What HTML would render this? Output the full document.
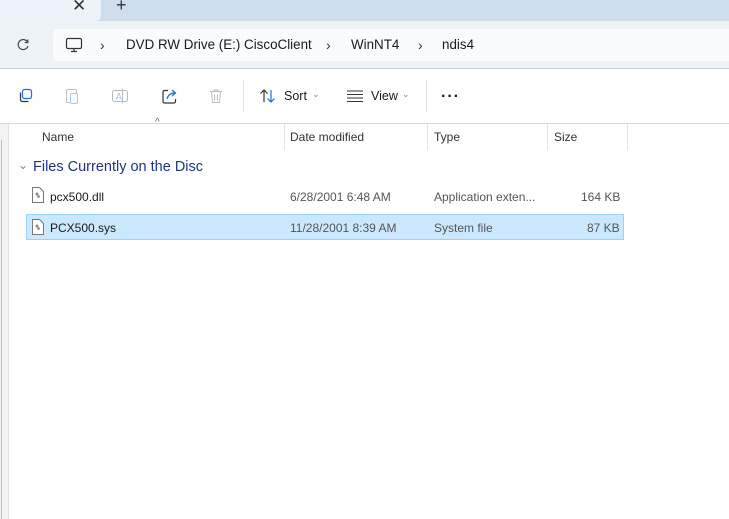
<!DOCTYPE html>
<html><head><meta charset="utf-8"><style>
body{margin:0;width:729px;height:519px;overflow:hidden;background:#fff;font-family:"Liberation Sans",sans-serif;position:relative;font-size:12px;color:#1a1a1a}
div{position:absolute;box-sizing:border-box}
.t{white-space:nowrap}
</style></head><body>
<div style="left:0;top:0;width:729px;height:21px;background:#cfdeec"></div>
<div style="left:0;top:0;width:101px;height:21px;background:#eef3f9;border-bottom-right-radius:6px"></div>
<div class="t" style="left:72px;top:-4px;font-size:17px;color:#333">✕</div>
<div class="t" style="left:116px;top:-5px;font-size:18px;color:#333">+</div>
<div style="left:0;top:21px;width:729px;height:48px;background:#eef3f8;border-bottom:1px solid #c8d2dc"></div>
<div style="left:53px;top:29px;width:676px;height:32px;background:#f9fbfd;border-radius:5px 0 0 5px"></div>
<svg style="position:absolute;left:15px;top:37px" width="16" height="16" viewBox="0 0 16 16"><path d="M12.5 5A5 5 0 1 0 13 9" fill="none" stroke="#444" stroke-width="1.2"/><path d="M12.8 2.5v3h-3" fill="none" stroke="#444" stroke-width="1.2"/></svg>
<svg style="position:absolute;left:65px;top:37px" width="18" height="16" viewBox="0 0 18 16"><rect x="1.5" y="1.5" width="15" height="10" rx="1.5" fill="none" stroke="#333" stroke-width="1.2"/><path d="M6 14.5h6M9 11.5v3" stroke="#333" stroke-width="1.2"/></svg>
<div class="t" style="left:100px;top:37px;font-size:14px;color:#333">›</div>
<div class="t" style="left:126px;top:37px;font-size:13.4px;color:#1a1a1a">DVD RW Drive (E:) CiscoClient</div>
<div class="t" style="left:326px;top:37px;font-size:14px;color:#333">›</div>
<div class="t" style="left:351px;top:37px;font-size:13.4px">WinNT4</div>
<div class="t" style="left:418px;top:37px;font-size:14px;color:#333">›</div>
<div class="t" style="left:442px;top:37px;font-size:13.4px">ndis4</div>
<svg style="position:absolute;left:17px;top:88px" width="16" height="16" viewBox="0 0 16 16"><rect x="5.5" y="1.5" width="9" height="9" rx="2" fill="none" stroke="#1a6ed8" stroke-width="1.2"/><path d="M3.5 4.5v7a2 2 0 0 0 2 2h6" fill="none" stroke="#333" stroke-width="1.2"/></svg>
<svg style="position:absolute;left:64px;top:87px" width="16" height="18" viewBox="0 0 16 18"><rect x="2.5" y="2.5" width="10" height="13" rx="1.5" fill="none" stroke="#bbb"/><rect x="6.5" y="6.5" width="7" height="10" rx="1.5" fill="#fff" stroke="#a8c8f0"/></svg>
<svg style="position:absolute;left:111px;top:87px" width="18" height="18" viewBox="0 0 18 18"><rect x="1.5" y="3.5" width="15" height="11" rx="2" fill="none" stroke="#bbb"/><text x="4.5" y="13" font-size="10" fill="#a8c8f0" font-family="Liberation Sans">A</text><path d="M11.5 1.5v15" stroke="#bbb"/></svg>
<svg style="position:absolute;left:161px;top:87px" width="18" height="18" viewBox="0 0 18 18"><path d="M7 3.5H3.5a1.5 1.5 0 0 0-1.5 1.5v9.5a1.5 1.5 0 0 0 1.5 1.5h9.5a1.5 1.5 0 0 0 1.5-1.5V12" fill="none" stroke="#333" stroke-width="1.2"/><path d="M6 12c1-4 4-6 8-6M11 3l3.5 3-3.5 3" fill="none" stroke="#1a6ed8" stroke-width="1.2"/></svg>
<svg style="position:absolute;left:208px;top:87px" width="16" height="18" viewBox="0 0 16 18"><path d="M2 4.5h12M6 4.5V3h4v1.5M3.5 4.5l1 11h7l1-11M6.5 7.5v6M9.5 7.5v6" fill="none" stroke="#bbb"/></svg>
<div style="left:243px;top:80px;width:1px;height:32px;background:#e3e3e3"></div>
<svg style="position:absolute;left:259px;top:88px" width="18" height="16" viewBox="0 0 18 16"><path d="M5 14V2M1.5 5.5 5 2l3.5 3.5" fill="none" stroke="#333" stroke-width="1.2"/><path d="M12 2v12M8.5 10.5 12 14l3.5-3.5" fill="none" stroke="#1a6ed8" stroke-width="1.2"/></svg>
<div class="t" style="left:284px;top:89px;font-size:12.5px">Sort</div>
<div class="t" style="left:312px;top:89px;font-size:9px;color:#888">⌄</div>
<svg style="position:absolute;left:346px;top:89px" width="18" height="14" viewBox="0 0 18 14"><path d="M1 2h16M1 5.5h16M1 9h16M1 12.5h16" stroke="#333" stroke-width="1"/></svg>
<div class="t" style="left:371px;top:89px;font-size:12.5px">View</div>
<div class="t" style="left:402px;top:89px;font-size:9px;color:#888">⌄</div>
<div style="left:426px;top:80px;width:1px;height:32px;background:#e3e3e3"></div>
<div class="t" style="left:441px;top:88px;font-size:16px;font-weight:bold;letter-spacing:1px">···</div>
<div style="left:0;top:123px;width:729px;height:1px;background:#d5d9dd"></div>
<div style="left:0;top:124px;width:9px;height:395px;background:#f3f3f3;border-right:1px solid #e2e2e2"></div>
<div style="left:1px;top:140px;width:1px;height:379px;background:#bdbdbd"></div>
<div class="t" style="left:155px;top:117px;font-size:10px;color:#666">^</div>
<div class="t" style="left:42px;top:130px;font-size:12px;color:#333">Name</div>
<div style="left:284px;top:124px;width:1px;height:26px;background:#e5e5e5"></div>
<div class="t" style="left:290px;top:130px;font-size:12px;color:#333">Date modified</div>
<div style="left:427px;top:124px;width:1px;height:26px;background:#e5e5e5"></div>
<div class="t" style="left:434px;top:130px;font-size:12px;color:#333">Type</div>
<div style="left:547px;top:124px;width:1px;height:26px;background:#e5e5e5"></div>
<div class="t" style="left:554px;top:130px;font-size:12px;color:#333">Size</div>
<div style="left:627px;top:124px;width:1px;height:26px;background:#e5e5e5"></div>
<div class="t" style="left:18px;top:158px;font-size:12px;color:#888">⌄</div>
<div class="t" style="left:33px;top:159px;font-size:14.5px;color:#1e3287">Files Currently on the Disc</div>
<div style="left:26px;top:214px;width:598px;height:26px;background:#cce8ff;border:1px solid #99d1ff"></div>
<svg style="position:absolute;left:32px;top:187px" width="12" height="16" viewBox="0 0 12 16"><path d="M.5.5h7l4 4v11H.5z" fill="#fff" stroke="#777"/><circle cx="5" cy="7" r="1.5" fill="#888"/><circle cx="6.5" cy="9.5" r="1.5" fill="#999"/></svg>
<div class="t" style="left:50px;top:190px;font-size:12px">pcx500.dll</div>
<div class="t" style="left:290px;top:190px;font-size:12px;color:#555">6/28/2001 6:48 AM</div>
<div class="t" style="left:434px;top:190px;font-size:12px;color:#555">Application exten...</div>
<div class="t" style="left:581px;top:190px;font-size:12px;color:#555">164 KB</div>
<svg style="position:absolute;left:32px;top:219px" width="12" height="16" viewBox="0 0 12 16"><path d="M.5.5h7l4 4v11H.5z" fill="#fff" stroke="#777"/><circle cx="5" cy="7" r="1.5" fill="#888"/><circle cx="6.5" cy="9.5" r="1.5" fill="#999"/></svg>
<div class="t" style="left:50px;top:221px;font-size:12px">PCX500.sys</div>
<div class="t" style="left:290px;top:221px;font-size:12px;color:#555">11/28/2001 8:39 AM</div>
<div class="t" style="left:434px;top:221px;font-size:12px;color:#555">System file</div>
<div class="t" style="left:587px;top:221px;font-size:12px;color:#555">87 KB</div>
</body></html>
